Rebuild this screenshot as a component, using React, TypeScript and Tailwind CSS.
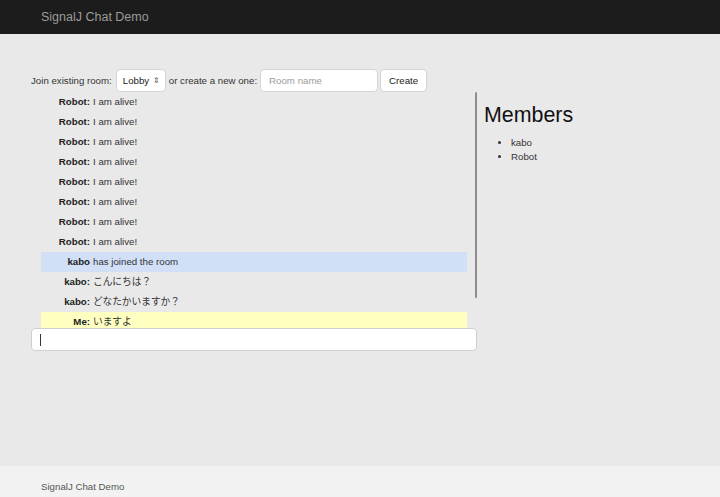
import React from 'react';

type Msg = { name: string; text: string; kind?: 'join' | 'me' };

const messages: Msg[] = [
    ...Array.from({ length: 8 }, () => ({ name: 'Robot:', text: 'I am alive!' })),
    { name: 'kabo', text: 'has joined the room', kind: 'join' },
    { name: 'kabo:', text: 'こんにちは？' },
    { name: 'kabo:', text: 'どなたかいますか？' },
    { name: 'Me:', text: 'いますよ', kind: 'me' },
];

const MessageRow: React.FC<{ msg: Msg }> = ({ msg }) => {
    const bg = msg.kind === 'join' ? 'bg-[#d1e0f7]' : msg.kind === 'me' ? 'bg-[#ffffc2]' : '';
    return (
        <div className={`flex items-center h-[20px] mx-[10px] shrink-0 ${bg}`}>
            <span className="w-[49px] text-right font-bold text-[#222]">{msg.name}</span>
            <span className="ml-[3px] text-[#333]">{msg.text}</span>
        </div>
    );
};

export default function App() {
    return (
        <div className="flex flex-col min-h-[497px] text-[9.7px] leading-[14px] font-['Liberation_Sans','Noto_Sans_CJK_JP',sans-serif]">
            <div className="h-[34px] bg-[#1c1c1c] flex items-center px-[41px]">
                <span className="text-[12.5px] text-[#9a9a9a]">SignalJ Chat Demo</span>
            </div>

            <div className="flex-1 bg-[#e9e9e9] pt-[35px] pl-[31px]">
                <div className="flex items-center h-[23px] text-[#333]">
                    <span>Join existing room:</span>
                    <div className="ml-[4px] w-[50px] h-[23px] bg-white border border-[#d4d4d4] rounded-[4px] flex items-center justify-between pl-[6px] pr-[5px]">
                        <span className="text-[#222]">Lobby</span>
                        <span className="text-[8px] text-[#555] leading-none">⇕</span>
                    </div>
                    <span className="ml-[3px]">or create a new one:</span>
                    <div className="ml-[3px] w-[118px] h-[23px] bg-white border border-[#d4d4d4] rounded-[4px] flex items-center pl-[8px] text-[#9a9a9a]">
                        Room name
                    </div>
                    <div className="ml-[2px] w-[47px] h-[23px] bg-white border border-[#d4d4d4] rounded-[4px] flex items-center justify-center text-[#222]">
                        Create
                    </div>
                </div>

                <div className="flex">
                    <div className="w-[446px] flex flex-col">
                        <div className="relative h-[236px] overflow-hidden">
                            <div className="flex flex-col">
                                {messages.map((m, i) => (
                                    <MessageRow key={i} msg={m} />
                                ))}
                            </div>
                            <div className="absolute right-[-1px] top-0 w-[3px] h-[206px] rounded-full bg-[#8e8e8e]"></div>
                        </div>
                        <div className="h-[23px] bg-white border border-[#cfcfcf] rounded-[4px] flex items-center pl-[8px]">
                            <span className="w-px h-[12px] bg-[#333]"></span>
                        </div>
                    </div>

                    <div className="ml-[7px] flex flex-col">
                        <h2 className="mt-[12px] text-[21.4px] leading-[23px] text-[#111]">Members</h2>
                        <ul className="mt-[9px] ml-[27px] list-disc text-[#333]">
                            <li>kabo</li>
                            <li>Robot</li>
                        </ul>
                    </div>
                </div>
            </div>

            <div className="h-[31px] bg-[#f2f2f2] flex items-center px-[41px] pt-[10px]">
                <span className="text-[#555]">SignalJ Chat Demo</span>
            </div>
        </div>
    );
}
